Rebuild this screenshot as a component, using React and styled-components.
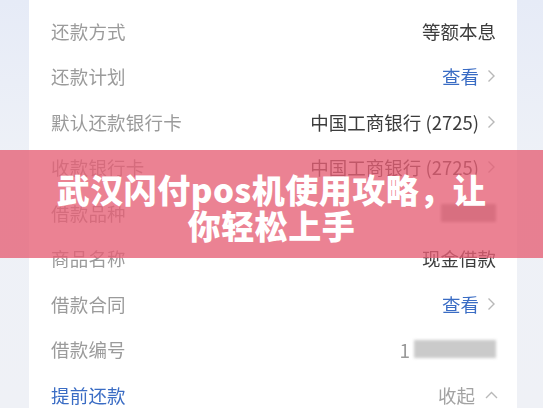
import React from "react";
import styled, { createGlobalStyle } from "styled-components";

const GlobalStyle = createGlobalStyle`
  html, body {
    margin: 0;
    padding: 0;
    background: #edf0f7;
    overflow: hidden;
  }
  body {
    font-family: "Noto Sans CJK SC", "Noto Sans", sans-serif;
  }
`;

const Page = styled.div`
  position: relative;
  width: 543px;
  height: 408px;
  overflow: hidden;
  background: linear-gradient(180deg, #e6ebf7 0%, #eef1f7 40%, #eff1f6 100%);
  padding: 0 26px 0 29px;
  box-sizing: border-box;
`;

const Card = styled.div`
  background: #fff;
  padding: 8px 21px 0 22px;
  height: 100%;
  box-sizing: border-box;
  filter: blur(0.35px);
`;

const Row = styled.div`
  display: flex;
  align-items: center;
  justify-content: space-between;
  height: 45.5px;
`;

const Label = styled.span`
  font-size: 18.5px;
  color: ${({ $link }) => ($link ? "#3a6cc4" : "#9b9b9b")};
  letter-spacing: 0.2px;
`;

const Value = styled.span`
  display: flex;
  align-items: center;
  gap: 8px;
  font-size: 18.5px;
  color: ${({ $tone }) =>
    $tone === "link" ? "#3a6cc4" : $tone === "muted" ? "#a3a3a3" : "#3c3c3c"};
`;

const Redacted = styled.span`
  display: inline-block;
  width: ${({ $w }) => $w}px;
  height: 18px;
  background: ${({ $dark }) => ($dark ? "#a9a9a9" : "#cacaca")};
  filter: blur(1.5px);
`;

const Digit = styled.span`
  color: #9a9a9a;
  font-size: 19px;
  margin-right: -4px;
`;

const Chevron = ({ up }) => (
  <svg
    width="9"
    height="14"
    viewBox="0 0 9 14"
    style={{ transform: up ? "rotate(-90deg)" : "none", marginLeft: up ? 4 : 0 }}
  >
    <polyline points="1.5,1.5 7,7 1.5,12.5" fill="none" stroke="#b8b8b8" strokeWidth="1.4" />
  </svg>
);

const Banner = styled.div`
  position: absolute;
  left: 0;
  right: 0;
  top: 150px;
  height: 108px;
  background: rgba(229, 95, 117, 0.78);
  display: flex;
  align-items: center;
  justify-content: center;
  padding-top: 6px;
  box-sizing: border-box;
`;

const Title = styled.h1`
  margin: 0;
  max-width: 452px;
  color: #fff;
  font-family: "Noto Sans CJK SC", "Noto Sans", sans-serif;
  font-weight: 900;
  font-size: 33px;
  line-height: 36px;
  text-align: center;
  letter-spacing: 0.5px;
`;

const rows = [
  { label: "还款方式", value: "等额本息" },
  { label: "还款计划", value: "查看", tone: "link", chevron: true },
  { label: "默认还款银行卡", value: "中国工商银行 (2725)", chevron: true },
  { label: "收款银行卡", value: "中国工商银行 (2725)", chevron: true },
  { label: "借款品种", redacted: 55 },
  { label: "商品名称", value: "现金借款" },
  { label: "借款合同", value: "查看", tone: "link", chevron: true },
  { label: "借款编号", number: true },
];

export default function App() {
  return (
    <>
      <GlobalStyle />
      <Page>
        <Card>
          {rows.map((r) => (
            <Row key={r.label}>
              <Label>{r.label}</Label>
              <Value $tone={r.tone}>
                {r.number ? (
                  <>
                    <Digit>1</Digit>
                    <Redacted $w={82} />
                  </>
                ) : r.redacted ? (
                  <Redacted $w={r.redacted} $dark />
                ) : (
                  r.value
                )}
                {r.chevron && <Chevron />}
              </Value>
            </Row>
          ))}
          <Row>
            <Label $link>提前还款</Label>
            <Value $tone="muted">
              收起
              <Chevron up />
            </Value>
          </Row>
        </Card>
        <Banner>
          <Title>武汉闪付pos机使用攻略，让你轻松上手</Title>
        </Banner>
      </Page>
    </>
  );
}
